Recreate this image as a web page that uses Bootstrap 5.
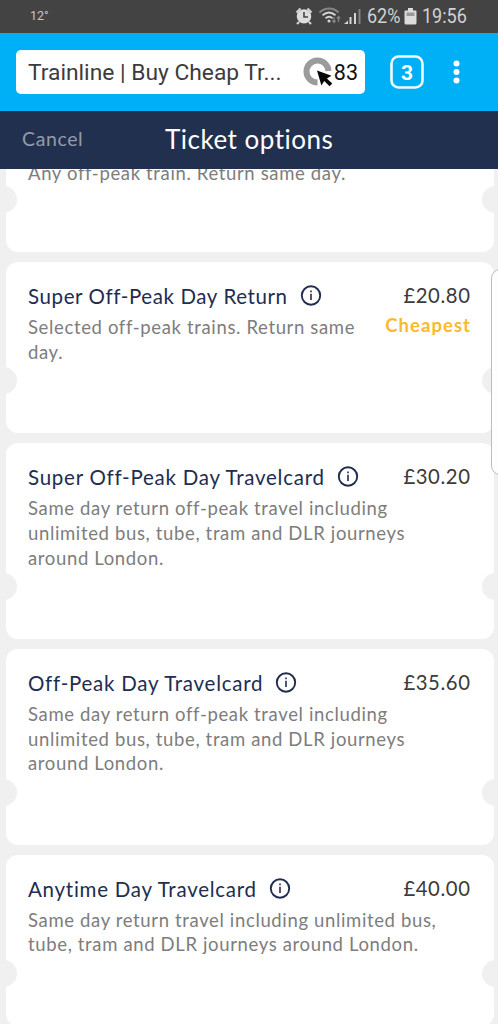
<!DOCTYPE html>
<html lang="en">
<head>
<meta charset="utf-8">
<meta name="viewport" content="width=device-width, initial-scale=1">
<title>Ticket options</title>
<link href="https://cdn.jsdelivr.net/npm/bootstrap@5.3.0/dist/css/bootstrap.min.css" rel="stylesheet">
<style>
body{font-family:Lato,"Open Sans",sans-serif;background:#f0f0f0;height:1024px}
.status{height:33px;background:#434343;color:#d2d2d2;font-family:Roboto,sans-serif;padding:0 31px 0 30px}
.temp{font-size:12.5px;color:#c4c4c4}
.nums{font-size:20px;line-height:33px;transform:scaleX(.9);transform-origin:left center}
.pct{margin-right:-4px}
.clock{margin-right:-5px}
.browser{height:78px;background:#00b0f6;padding:0 34px 0 16px}
.address{width:349px;height:44px;border-radius:5px;font-family:Roboto,sans-serif;font-size:22.8px;color:#3c3c3c;padding:2px 7px 0 12px}
.score{color:#111;font-size:21.5px}
.topbar{height:58px;background:#21304f;color:#fff;padding:0 22px 3px}
.cancel{color:#939aab;font-size:19.5px;letter-spacing:.6px;width:143px}
.heading{font-size:26px;letter-spacing:.5px;line-height:32px}
.tickets{height:855px;gap:10px;padding:0 4px 0 6px}
.ticket{border-radius:12px;padding:22px 24px 68.4px 22px;flex:none}
.ticket::before,.ticket::after{content:"";position:absolute;width:27px;height:27px;border-radius:50%;background:#f0f0f0;bottom:39px}
.ticket::before{left:-16px}
.ticket::after{right:-15px}
.ticket.cut{margin-top:-63px;padding-top:55px;padding-bottom:66.2px}
.title{font-size:20.5px;line-height:25px;color:#212d50;letter-spacing:.75px;margin:0 0 6px}
.title svg{margin-left:12px}
.title.tight{letter-spacing:.6px}
.desc{font-size:18.5px;line-height:24.8px;color:#7d7d7d;letter-spacing:.64px}
.price{font-size:20.3px;line-height:23px;color:#3b3b3b;letter-spacing:.6px;margin-right:-.6px}
.best{font-size:18.5px;line-height:24px;color:#fdb92e;font-weight:700;letter-spacing:1.05px;right:23px;top:51px}
.edge{left:491px;top:269px;width:20px;height:206px;border:1px solid #bcbcbc;border-radius:9px;background:rgba(255,255,255,.85)}
</style>
</head>
<body class="overflow-hidden position-relative">
<header>
  <div class="status d-flex align-items-center justify-content-between">
    <span class="temp">12°</span>
    <div class="d-flex align-items-center">
      <svg width="72" height="33" viewBox="0 0 72 33" fill="none" stroke="#d4d4d4">
        <circle cx="9" cy="16.4" r="7.2" fill="#dcdcdc" stroke="none"/>
        <path d="M1.500 12.500l4-4M16.500 12.500l-4-4M4 22l-2 2M14 22l2 2" stroke-width="2.200"/>
        <path d="M9 12v5h4" stroke="#444" stroke-width="1.600"/>
        <path d="M24.500 12.500c6-5.200 13.500-5.200 19 0" stroke="#858585" stroke-width="2"/>
        <path d="M27.500 15.300c4-3.400 9-3.400 13 0M30.500 18.300c2.500-2 5-2 7 0" stroke-width="1.800"/>
        <circle cx="34" cy="21" r="1.500" fill="#d4d4d4" stroke="none"/>
        <path d="M39 17v5m-1.500-1.500L39 22.500l1.500-2M43.500 22v-5m-1.500 1.500l1.500-2 1.500 2" stroke="#858585" stroke-width="1.300"/>
        <path d="M49 24l4-3.500V24z" fill="#d4d4d4" stroke="none"/>
        <path d="M55.500 24v-7M60 24V13" stroke-width="2"/>
        <path d="M64.500 24V9" stroke="#858585" stroke-width="2"/>
      </svg>
      <span class="nums pct">62%</span>
      <svg width="22" height="33" viewBox="0 0 22 33"><path d="M8 8h5v2.500h2.500q1 0 1 1V23q0 1.500-1.500 1.500H6Q4.500 24.500 4.500 23V11.500q0-1 1-1H8z" fill="#dcdcdc"/><path d="M6.500 12.500h8V16h-8z" fill="#999"/></svg>
      <span class="nums clock">19:56</span>
    </div>
  </div>
  <div class="browser d-flex align-items-center">
    <div class="address bg-white d-flex align-items-center justify-content-between">
      <span class="text-nowrap">Trainline | Buy Cheap Tr...</span>
      <span class="d-flex align-items-center">
        <svg width="31" height="32" viewBox="0 0 31 32"><path d="M14.500 25.500A11 11 0 1 1 25.500 14" fill="none" stroke="#9b9b9b" stroke-width="6"/><path d="M14 13.500l14.500 5.200-4.600 2.700 5.400 5.200-2.700 2.700-5.400-5.200-2.800 4.400z" fill="#080808"/></svg>
        <span class="score">83</span>
      </span>
    </div>
    <svg class="ms-auto" width="84" height="40" viewBox="0 0 84 40"><rect x="11.500" y="4.500" width="31" height="31" rx="7" fill="none" stroke="#effaff" stroke-width="2.600"/><text x="27" y="27.500" text-anchor="middle" font-family="Roboto" font-weight="700" font-size="21" fill="#fff">3</text><g fill="#fff"><circle cx="76.500" cy="11.500" r="3"/><circle cx="76.500" cy="20" r="3"/><circle cx="76.500" cy="28.500" r="3"/></g></svg>
  </div>
  <nav class="topbar d-flex align-items-center">
    <span class="cancel">Cancel</span>
    <h1 class="heading m-0 fw-normal">Ticket options</h1>
  </nav>
</header>
<main class="tickets d-flex flex-column overflow-hidden">
  <article class="ticket cut bg-white position-relative">
    <p class="desc m-0">Any off-peak train. Return same day.</p>
  </article>
  <article class="ticket bg-white position-relative">
    <div class="d-flex justify-content-between">
      <h2 class="title tight fw-normal d-flex align-items-center"><span>Super Off-Peak Day Return</span><svg width="22" height="22" viewBox="0 0 22 22"><circle cx="11" cy="10.500" r="9.200" fill="none" stroke="#212d50" stroke-width="1.900"/><path d="M11 5.500v1.800M11 8.800V15" stroke="#212d50" stroke-width="1.600"/></svg></h2>
      <span class="price">£20.80</span>
    </div>
    <p class="desc m-0">Selected off-peak trains. Return same<br>day.</p>
    <span class="best position-absolute">Cheapest</span>
  </article>
  <article class="ticket bg-white position-relative">
    <div class="d-flex justify-content-between">
      <h2 class="title fw-normal d-flex align-items-center"><span>Super Off-Peak Day Travelcard</span><svg width="22" height="22" viewBox="0 0 22 22"><circle cx="11" cy="10.500" r="9.200" fill="none" stroke="#212d50" stroke-width="1.900"/><path d="M11 5.500v1.800M11 8.800V15" stroke="#212d50" stroke-width="1.600"/></svg></h2>
      <span class="price">£30.20</span>
    </div>
    <p class="desc m-0">Same day return off-peak travel including<br>unlimited bus, tube, tram and DLR journeys<br>around London.</p>
  </article>
  <article class="ticket bg-white position-relative">
    <div class="d-flex justify-content-between">
      <h2 class="title fw-normal d-flex align-items-center"><span>Off-Peak Day Travelcard</span><svg width="22" height="22" viewBox="0 0 22 22"><circle cx="11" cy="10.500" r="9.200" fill="none" stroke="#212d50" stroke-width="1.900"/><path d="M11 5.500v1.800M11 8.800V15" stroke="#212d50" stroke-width="1.600"/></svg></h2>
      <span class="price">£35.60</span>
    </div>
    <p class="desc m-0">Same day return off-peak travel including<br>unlimited bus, tube, tram and DLR journeys<br>around London.</p>
  </article>
  <article class="ticket bg-white position-relative">
    <div class="d-flex justify-content-between">
      <h2 class="title fw-normal d-flex align-items-center"><span>Anytime Day Travelcard</span><svg width="22" height="22" viewBox="0 0 22 22"><circle cx="11" cy="10.500" r="9.200" fill="none" stroke="#212d50" stroke-width="1.900"/><path d="M11 5.500v1.800M11 8.800V15" stroke="#212d50" stroke-width="1.600"/></svg></h2>
      <span class="price">£40.00</span>
    </div>
    <p class="desc m-0">Same day return travel including unlimited bus,<br>tube, tram and DLR journeys around London.</p>
  </article>
</main>
<div class="edge position-absolute"></div>
<script src="https://cdn.jsdelivr.net/npm/bootstrap@5.3.0/dist/js/bootstrap.bundle.min.js"></script>
</body>
</html>
